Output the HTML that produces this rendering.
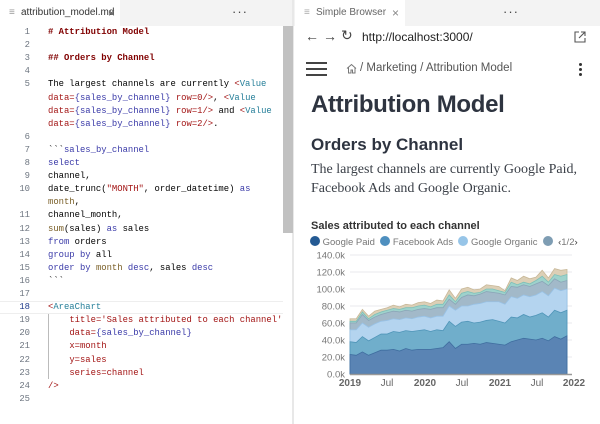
<!DOCTYPE html>
<html><head><meta charset="utf-8">
<style>
*{margin:0;padding:0;box-sizing:border-box}
body{width:600px;height:424px;overflow:hidden;background:#fff;font-family:"Liberation Sans",sans-serif;position:relative}
.tabbar{position:absolute;top:0;height:26px;background:#f3f3f3}
.tab{position:absolute;top:0;height:26px;background:#fff;font-size:10px;color:#333;line-height:26px;white-space:nowrap}
.dots{position:absolute;top:0;line-height:24px;font-size:13px;color:#444;letter-spacing:1px}
.code{position:absolute;left:0;top:26px;width:283px;height:398px;font-family:"Liberation Mono",monospace;font-size:8.9px}
.row{position:absolute;left:0;width:283px;height:13.1px;line-height:13.1px;white-space:pre}
.ln{position:absolute;left:0;width:30px;text-align:right;color:#6e7681}
.tx{position:absolute;left:48px}
.r{color:#a31515}.k{color:#3a3aa8}.t{color:#267f99}.br{color:#795e26}.h{color:#800000;font-weight:bold}
</style></head><body>
<div class="tabbar" style="left:0;width:292px"></div>
<div class="tab" style="left:0;width:120px"><span style="position:absolute;left:9px;color:#999;font-size:10px">&#8801;</span><span style="position:absolute;left:21px">attribution_model.md</span><span style="position:absolute;left:108px;color:#555;font-size:12px">×</span></div>
<div class="dots" style="left:232px">···</div>
<div class="tabbar" style="left:294px;width:306px"></div>
<div class="tab" style="left:295px;width:110px;color:#666"><span style="position:absolute;left:9px;color:#aaa;font-size:10px">&#8801;</span><span style="position:absolute;left:21px">Simple Browser</span><span style="position:absolute;left:97px;color:#888;font-size:12px">×</span></div>
<div class="dots" style="left:503px">···</div>
<div style="position:absolute;left:292px;top:0;width:2px;height:424px;background:#e8e8e8"></div>
<div style="position:absolute;left:283px;top:26px;width:10px;height:207px;background:#c1c1c1"></div>

<div class="code">
<div class="row" style="top:0px"><span class="ln">1</span><span class="tx"><span class="h"># Attribution Model</span></span></div>
<div class="row" style="top:13.1px"><span class="ln">2</span></div>
<div class="row" style="top:26.2px"><span class="ln">3</span><span class="tx"><span class="h">## Orders by Channel</span></span></div>
<div class="row" style="top:39.3px"><span class="ln">4</span></div>
<div class="row" style="top:52.4px"><span class="ln">5</span><span class="tx">The largest channels are currently <span class="r">&lt;</span><span class="t">Value</span></span></div>
<div class="row" style="top:65.5px"><span class="tx"><span class="r">data=</span><span class="k">{sales_by_channel}</span> <span class="r">row=0/&gt;</span>, <span class="r">&lt;</span><span class="t">Value</span></span></div>
<div class="row" style="top:78.6px"><span class="tx"><span class="r">data=</span><span class="k">{sales_by_channel}</span> <span class="r">row=1/&gt;</span> and <span class="r">&lt;</span><span class="t">Value</span></span></div>
<div class="row" style="top:91.7px"><span class="tx"><span class="r">data=</span><span class="k">{sales_by_channel}</span> <span class="r">row=2/&gt;</span>.</span></div>
<div class="row" style="top:104.8px"><span class="ln">6</span></div>
<div class="row" style="top:117.9px"><span class="ln">7</span><span class="tx">&#96;&#96;&#96;<span class="k">sales_by_channel</span></span></div>
<div class="row" style="top:131px"><span class="ln">8</span><span class="tx"><span class="k">select</span></span></div>
<div class="row" style="top:144.1px"><span class="ln">9</span><span class="tx">channel,</span></div>
<div class="row" style="top:157.2px"><span class="ln">10</span><span class="tx">date_trunc(<span class="r">"MONTH"</span>, order_datetime) <span class="k">as</span></span></div>
<div class="row" style="top:170.3px"><span class="tx"><span class="br">month</span>,</span></div>
<div class="row" style="top:183.4px"><span class="ln">11</span><span class="tx">channel_month,</span></div>
<div class="row" style="top:196.5px"><span class="ln">12</span><span class="tx"><span class="br">sum</span>(sales) <span class="k">as</span> sales</span></div>
<div class="row" style="top:209.6px"><span class="ln">13</span><span class="tx"><span class="k">from</span> orders</span></div>
<div class="row" style="top:222.7px"><span class="ln">14</span><span class="tx"><span class="k">group by</span> all</span></div>
<div class="row" style="top:235.8px"><span class="ln">15</span><span class="tx"><span class="k">order by</span> <span class="br">month</span> <span class="k">desc</span>, sales <span class="k">desc</span></span></div>
<div class="row" style="top:248.9px"><span class="ln">16</span><span class="tx">&#96;&#96;&#96;</span></div>
<div class="row" style="top:262px"><span class="ln">17</span></div>
<div class="row" style="top:275.1px;box-shadow:inset 0 1px 0 #eee,inset 0 -1px 0 #eee"><span class="ln" style="color:#1e3a8a">18</span><span class="tx"><span class="r">&lt;</span><span class="t">AreaChart</span></span></div>
<div class="row" style="top:288.2px"><span class="ln">19</span><span class="tx">    <span class="r">title='Sales attributed to each channel'</span></span></div>
<div class="row" style="top:301.3px"><span class="ln">20</span><span class="tx">    <span class="r">data=</span><span class="k">{sales_by_channel}</span></span></div>
<div class="row" style="top:314.4px"><span class="ln">21</span><span class="tx">    <span class="r">x=month</span></span></div>
<div class="row" style="top:327.5px"><span class="ln">22</span><span class="tx">    <span class="r">y=sales</span></span></div>
<div class="row" style="top:340.6px"><span class="ln">23</span><span class="tx">    <span class="r">series=channel</span></span></div>
<div class="row" style="top:353.7px"><span class="ln">24</span><span class="tx"><span class="r">/&gt;</span></span></div>
<div class="row" style="top:366.8px"><span class="ln">25</span></div>
<div style="position:absolute;left:48px;top:288px;width:1px;height:65px;background:#bbb"></div>
</div>

<div style="position:absolute;left:305px;top:28px;font-size:14px;color:#444">&#8592;</div>
<div style="position:absolute;left:323px;top:28px;font-size:14px;color:#444">&#8594;</div>
<div style="position:absolute;left:341px;top:27px;font-size:14px;color:#444">&#8635;</div>
<div style="position:absolute;left:362px;top:30px;font-size:12px;color:#222">http://localhost:3000/</div>
<svg style="position:absolute;left:574px;top:31px" width="12" height="12" viewBox="0 0 12 12"><path d="M5 1H1v10h10V7M7 1h4v4M11 1L5 7" fill="none" stroke="#555" stroke-width="1.1"/></svg>
<div style="position:absolute;left:306px;top:62px;width:21px;height:2px;background:#444"></div>
<div style="position:absolute;left:306px;top:68px;width:21px;height:2px;background:#444"></div>
<div style="position:absolute;left:306px;top:74px;width:21px;height:2px;background:#444"></div>
<svg style="position:absolute;left:346px;top:63px" width="11" height="11" viewBox="0 0 11 11"><path d="M1 5.5L5.5 1.5L10 5.5M2.5 4.5V10h2.5V7h1.5v3h2.5V4.5" fill="none" stroke="#777" stroke-width="1"/></svg>
<div style="position:absolute;left:360px;top:62px;font-size:11.5px;color:#555">/ Marketing / Attribution Model</div>
<div style="position:absolute;left:579px;top:63px;width:3px;height:3px;border-radius:2px;background:#333;box-shadow:0 5px 0 #333,0 10px 0 #333"></div>
<div style="position:absolute;left:311px;top:91px;font-size:24px;font-weight:bold;color:#2e3440;letter-spacing:-0.3px">Attribution Model</div>
<div style="position:absolute;left:311px;top:135px;font-size:17px;font-weight:bold;color:#2e3440">Orders by Channel</div>
<div style="position:absolute;left:311px;top:160px;font-family:'Liberation Serif',serif;font-size:14px;line-height:19px;color:#3b4048">The largest channels are currently Google Paid,<br>Facebook Ads and Google Organic.</div>
<div style="position:absolute;left:311px;top:220px;font-size:11px;font-weight:bold;color:#333">Sales attributed to each channel</div>
<div style="position:absolute;left:310px;top:236px;font-size:9.5px;color:#777;white-space:nowrap;line-height:12px">
<span style="display:inline-block;width:10px;height:10px;border-radius:5px;background:#245a93;vertical-align:-1px"></span> Google Paid&nbsp;
<span style="display:inline-block;width:10px;height:10px;border-radius:5px;background:#4e8fbf;vertical-align:-1px"></span> Facebook Ads&nbsp;
<span style="display:inline-block;width:10px;height:10px;border-radius:5px;background:#97c5e8;vertical-align:-1px"></span> Google Organic&nbsp;
<span style="display:inline-block;width:10px;height:10px;border-radius:5px;background:#7e9db3;vertical-align:-1px"></span>&nbsp;&nbsp;<span style="color:#444">‹</span>1/2<span style="color:#333">›</span></div>

<svg style="position:absolute;left:300px;top:245px" width="300" height="150" font-family="Liberation Sans">
<g stroke="#e9e9ee">
<line x1="50" x2="272" y1="10" y2="10"/><line x1="50" x2="272" y1="27" y2="27"/><line x1="50" x2="272" y1="44" y2="44"/><line x1="50" x2="272" y1="61" y2="61"/><line x1="50" x2="272" y1="78" y2="78"/><line x1="50" x2="272" y1="95" y2="95"/><line x1="50" x2="272" y1="112" y2="112"/>
</g>
<g font-size="9.5" fill="#777" text-anchor="end">
<text x="45" y="13.5">140.0k</text><text x="45" y="30.5">120.0k</text><text x="45" y="47.5">100.0k</text><text x="45" y="64.5">80.0k</text><text x="45" y="81.5">60.0k</text><text x="45" y="98.5">40.0k</text><text x="45" y="115.5">20.0k</text><text x="45" y="132.5">0.0k</text>
</g>
<g transform="translate(50,129) scale(6.2,-0.85)" stroke-width="0.8">
<path vector-effect="non-scaling-stroke" fill="#dccfb6" stroke="#c8b898" d="M0,0L0,65L1,65L2,76L3,68L4,74L5,76L6,78L7,81L8,79L9,82L10,81L11,84L12,85L13,83L14,87L15,86L16,99L17,89L18,100L19,102L20,99L21,100L22,105L23,104L24,103L25,98L26,113L27,110L28,115L29,112L30,114L31,122L32,113L33,124L34,122L35,123L35,0Z"/>
<path vector-effect="non-scaling-stroke" fill="#9ed2cc" stroke="#7cc0b8" d="M0,0L0,62L1,62L2,73L3,65L4,70L5,73L6,75L7,77L8,76L9,78L10,78L11,80L12,81L13,79L14,82L15,82L16,93L17,85L18,95L19,97L20,95L21,96L22,100L23,100L24,98L25,96L26,108L27,105L28,108L29,106L30,110L31,115L32,108L33,117L34,115L35,117L35,0Z"/>
<path vector-effect="non-scaling-stroke" fill="#a2b9c9" stroke="#8aa5b7" d="M0,0L0,60L1,60L2,70L3,63L4,67L5,70L6,72L7,74L8,73L9,75L10,74L11,76L12,77L13,76L14,78L15,78L16,88L17,82L18,90L19,93L20,92L21,94L22,97L23,96L24,95L25,93L26,103L27,102L28,105L29,103L30,106L31,109L32,104L33,112L34,108L35,110L35,0Z"/>
<path vector-effect="non-scaling-stroke" fill="#b4d4ef" stroke="#98c2e6" d="M0,0L0,52L1,52L2,60L3,55L4,59L5,62L6,63L7,65L8,64L9,66L10,65L11,67L12,68L13,66L14,68L15,68L16,80L17,75L18,80L19,80L20,82L21,83L22,85L23,85L24,85L25,82L26,91L27,89L28,93L29,91L30,93L31,97L32,92L33,101L34,98L35,100L35,0Z"/>
<path vector-effect="non-scaling-stroke" fill="#70aecb" stroke="#4f95b8" d="M0,0L0,38L1,37L2,44L3,39L4,43L5,47L6,47L7,50L8,49L9,51L10,50L11,51L12,52L13,50L14,52L15,51L16,62L17,56L18,61L19,62L20,60L21,61L22,63L23,64L24,62L25,60L26,67L27,66L28,70L29,67L30,69L31,72L32,67L33,75L34,72L35,75L35,0Z"/>
<path vector-effect="non-scaling-stroke" fill="#5a84b4" stroke="#3f6d9f" d="M0,0L0,23L1,22L2,26L3,22L4,25L5,28L6,28L7,29L8,27L9,30L10,28L11,29L12,29L13,29L14,30L15,31L16,38L17,30L18,35L19,35L20,36L21,35L22,37L23,36L24,35L25,34L26,38L27,40L28,42L29,41L30,40L31,42L32,39L33,44L34,41L35,45L35,0Z"/>
</g>
<line x1="50" x2="272" y1="129.5" y2="129.5" stroke="#999" stroke-width="1.5"/>
<g font-size="10" fill="#666" text-anchor="middle">
<text x="50" y="141" font-weight="bold">2019</text><text x="87" y="141">Jul</text><text x="125" y="141" font-weight="bold">2020</text><text x="162" y="141">Jul</text><text x="200" y="141" font-weight="bold">2021</text><text x="237" y="141">Jul</text><text x="274" y="141" font-weight="bold">2022</text>
</g>
</svg>
</body></html>
